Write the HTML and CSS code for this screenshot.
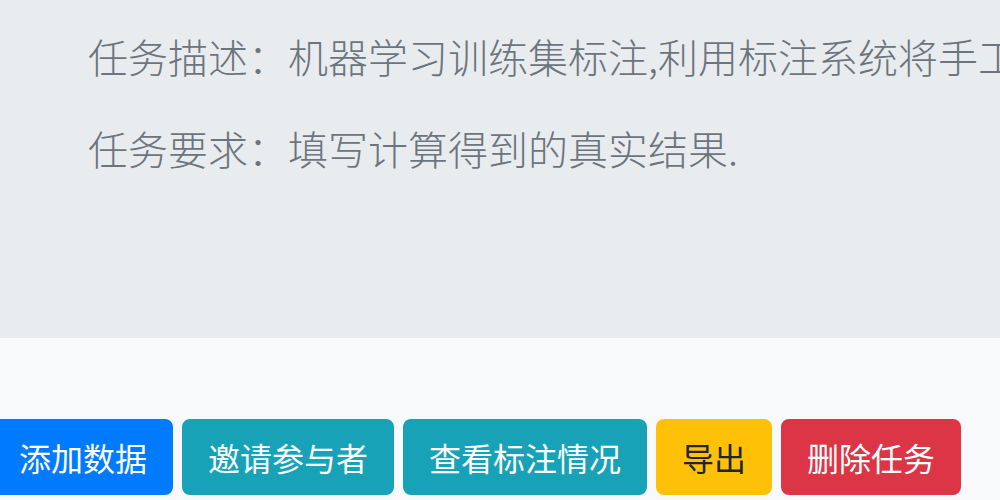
FILE: index.html
```html
<!DOCTYPE html>
<html lang="zh-CN">
<head>
<meta charset="utf-8">
<title>任务详情</title>
<link rel="stylesheet" href="styles.css">
</head>
<body>
<div class="jumbotron">
  <p class="lead">任务描述：机器学习训练集标注,利用标注系统将手工标注的数据用于模型训练</p>
  <p class="lead">任务要求：填写计算得到的真实结果.</p>
</div>
<div class="actions">
  <button class="btn btn-primary">添加数据</button>
  <button class="btn btn-info">邀请参与者</button>
  <button class="btn btn-info">查看标注情况</button>
  <button class="btn btn-warning">导出</button>
  <button class="btn btn-danger">删除任务</button>
</div>
</body>
</html>
```
FILE: styles.css
```css
html, body {
  margin: 0;
  padding: 0;
  width: 1000px;
  height: 500px;
  overflow: hidden;
  background: #f8f9fa;
  font-family: "Noto Sans CJK SC", "Noto Sans", sans-serif;
}

.jumbotron {
  box-sizing: border-box;
  height: 338px;
  background: #e9ecef;
  padding: 26px 0 0 88px;
  white-space: nowrap;
  overflow: hidden;
}

.lead {
  margin: 0 0 32px;
  font-size: 40px;
  line-height: 60px;
  font-weight: 300;
  color: #6c757d;
}

.actions {
  display: flex;
  gap: 9px;
  padding-top: 81px;
  margin-left: -7px;
}

.btn {
  font-family: inherit;
  font-size: 32px;
  line-height: 48px;
  font-weight: 400;
  padding: 12px 24px;
  border: 2px solid transparent;
  border-radius: 8px;
  color: #fff;
  white-space: nowrap;
}

.btn-primary { background: #007bff; border-color: #007bff; }
.btn-info { background: #17a2b8; border-color: #17a2b8; }
.btn-warning { background: #ffc107; border-color: #ffc107; color: #212529; }
.btn-danger { background: #dc3545; border-color: #dc3545; }
```
